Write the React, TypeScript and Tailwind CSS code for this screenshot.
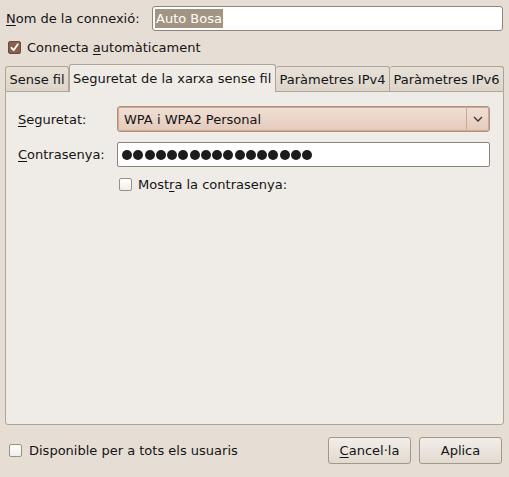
import React from "react";

function Check({ checked, className = "" }: { checked?: boolean; className?: string }) {
  if (checked) {
    return (
      <div className={"w-[13px] h-[13px] rounded-[2px] border border-[#6e4a3b] bg-[#8a5f4d] flex items-center justify-center shrink-0 " + className}>
        <svg width="9" height="9" viewBox="0 0 9 9">
          <path d="M1.5 4.8 L3.6 7.2 L7.8 1.2" fill="none" stroke="#ffffff" strokeWidth="1.8" strokeLinecap="round" strokeLinejoin="round" />
        </svg>
      </div>
    );
  }
  return (
    <div className={"w-[13px] h-[13px] rounded-[2px] border border-[#9a8f83] bg-gradient-to-b from-[#ffffff] to-[#f1ede8] shrink-0 " + className} />
  );
}

export default function App() {
  const dots = Array.from({ length: 17 });
  return (
    <div className="w-[509px] h-[477px] bg-[#e6ded5] flex flex-col font-['DejaVu_Sans',sans-serif] text-[13px] text-[#141414] leading-none">
      {/* Row 1 */}
      <div className="flex items-center h-[25px] mt-[6px] pl-[6px] pr-[6px]">
        <span className="w-[146px]">
          <span className="underline underline-offset-2">N</span>om de la connexió:
        </span>
        <div className="flex-1 h-[25px] border border-[#8e8376] rounded-[3px] bg-white flex items-center pl-[2px]">
          <span className="bg-[#a39381] text-white px-[1px] h-[19px] flex items-center">Auto Bosa</span>
        </div>
      </div>
      {/* Row 2 */}
      <div className="flex items-center h-[13px] mt-[10px] pl-[8px]">
        <Check checked />
        <span className="ml-[6px]">
          Connecta <span className="underline underline-offset-2">a</span>utomàticament
        </span>
      </div>
      {/* Tabs */}
      <div className="flex items-end h-[28px] mt-[10px] px-[5px] relative z-10">
        <div className="w-[64px] h-[25px] mb-[1px] border border-[#b0a497] border-b-0 rounded-t-[3px] bg-gradient-to-b from-[#e8e1d8] to-[#ddd5cb] flex items-center justify-center">
          Sense fil
        </div>
        <div className="w-[207px] h-[28px] border border-[#b0a497] border-b-0 rounded-t-[3px] bg-[#efebe6] flex items-center pl-[3px] pb-[1px]">
          Seguretat de la xarxa sense fil
        </div>
        <div className="w-[114px] h-[25px] mb-[1px] border border-[#b0a497] border-b-0 border-l-0 rounded-t-[3px] bg-gradient-to-b from-[#e8e1d8] to-[#ddd5cb] flex items-center justify-center">
          Paràmetres IPv4
        </div>
        <div className="w-[114px] h-[25px] mb-[1px] border border-[#b0a497] border-b-0 border-l-0 rounded-t-[3px] bg-gradient-to-b from-[#e8e1d8] to-[#ddd5cb] flex items-center justify-center">
          Paràmetres IPv6
        </div>
      </div>
      {/* Panel */}
      <div className="mx-[5px] mt-[-1px] h-[334px] border border-[#b0a497] rounded-b-[3px] bg-[#efebe6] relative">
        <div className="absolute left-[65px] top-[-1px] w-[205px] h-[1px] bg-[#efebe6]" />
        <div className="flex items-center mt-[14px] h-[26px] pl-[12px] pr-[13px]">
          <span className="w-[99px]">
            <span className="underline underline-offset-2">S</span>eguretat:
          </span>
          <div className="flex-1 h-[26px] border border-[#a2978b] rounded-[3px] p-0 bg-[#e9d6ca]">
            <div className="w-full h-full border border-[#dba48a] rounded-[2px] bg-gradient-to-b from-[#f0dfd4] to-[#e4cbbd] flex items-center">
              <span className="flex-1 pl-[5px]">WPA i WPA2 Personal</span>
              <div className="w-[1px] h-full bg-[#c9a895]" />
              <div className="w-[21px] flex items-center justify-center">
                <svg width="10" height="6" viewBox="0 0 10 6">
                  <path d="M1 1 L5 5 L9 1" fill="none" stroke="#3a3330" strokeWidth="1.3" />
                </svg>
              </div>
            </div>
          </div>
        </div>
        <div className="flex items-center mt-[10px] h-[25px] pl-[12px] pr-[13px]">
          <span className="w-[99px]">
            <span className="underline underline-offset-2">C</span>ontrasenya:
          </span>
          <div className="flex-1 h-[25px] border border-[#8e8376] rounded-[2px] bg-white flex items-center pl-[4px] gap-[1.25px]">
            {dots.map((_, i) => (
              <span key={i} className="w-[10px] h-[10px] rounded-full bg-[#1c1c1c]" />
            ))}
          </div>
        </div>
        <div className="flex items-center mt-[11px] h-[13px] pl-[113px]">
          <Check />
          <span className="ml-[6px]">
            Most<span className="underline underline-offset-2">r</span>a la contrasenya:
          </span>
        </div>
      </div>
      {/* Bottom */}
      <div className="flex items-center flex-1 pl-[9px] pr-[7px] pb-[1px]">
        <Check />
        <span className="ml-[7px] flex-1">Disponible per a tots els usuaris</span>
        <button className="w-[83px] h-[27px] border border-[#a39888] rounded-[3px] bg-gradient-to-b from-[#f2eee9] to-[#e2dad0] flex items-center justify-center">
          <span>
            <span className="underline underline-offset-2">C</span>ancel·la
          </span>
        </button>
        <button className="w-[83px] h-[27px] ml-[8px] border border-[#a39888] rounded-[3px] bg-gradient-to-b from-[#f2eee9] to-[#e2dad0] flex items-center justify-center">
          Aplica
        </button>
      </div>
    </div>
  );
}
